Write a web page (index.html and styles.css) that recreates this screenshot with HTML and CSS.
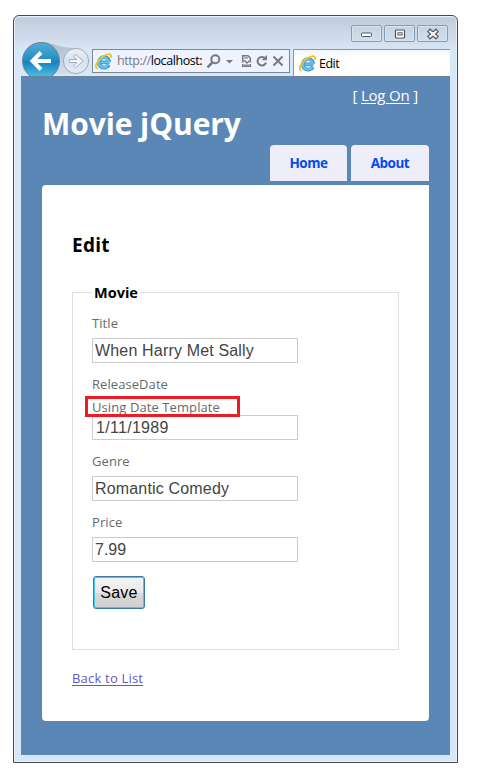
FILE: index.html
```html
<!DOCTYPE html>
<html lang="en">
<head>
<meta charset="utf-8">
<title>Edit</title>
<link rel="stylesheet" href="styles.css">
</head>
<body>
<svg class="defs" width="0" height="0">
  <defs>
    <linearGradient id="blue" x1="0" y1="0" x2="0" y2="1"><stop offset="0" stop-color="#55aed8"/><stop offset=".5" stop-color="#208abf"/><stop offset=".52" stop-color="#1681bb"/><stop offset="1" stop-color="#55c8ee"/></linearGradient>
    <linearGradient id="pale" x1="0" y1="0" x2="0" y2="1"><stop offset="0" stop-color="#edf1f8"/><stop offset=".5" stop-color="#d8e1ee"/><stop offset="1" stop-color="#e3ebf6"/></linearGradient>
    <linearGradient id="bridge" x1="0" y1="0" x2="0" y2="1"><stop offset="0" stop-color="#aebccb"/><stop offset="1" stop-color="#d1dfed"/></linearGradient>
    <symbol id="ie" viewBox="0 0 16 16">
      <path d="M13.6 8.9H5.2M13 11.1A5 5 0 1 1 13.5 8.2" fill="none" stroke="#2d8fca" stroke-width="3.5"/>
      <path d="M13.2 8.8H5.2M12.5 11.2A4.8 4.8 0 1 1 13.1 8.3" fill="none" stroke="#62c0ec" stroke-width="2.3"/>
      <path d="M2.7 14.7C-1.5 14.5 2 6.8 7.2 3.4C11.5.4 16.6-.2 14.8 4.4" fill="none" stroke="#f9c021" stroke-width="1.8"/>
    </symbol>
  </defs>
</svg>
<div class="window">
  <div class="titlebar">
    <span class="ctl"><svg width="14" height="12"><rect x="1.5" y="5" width="10" height="3.5" rx="1" fill="#fff" stroke="#50545f"/></svg></span>
    <span class="ctl"><svg width="12" height="12"><rect x="1.5" y="2" width="9" height="8" rx="1" fill="#fff" stroke="#50545f" stroke-width="1.2"/><rect x="4" y="4.8" width="4" height="2.2" fill="#fff" stroke="#50545f"/></svg></span>
    <span class="ctl"><svg width="12" height="12"><path d="M1.5 2L10.5 10M10.5 2L1.5 10" stroke="#50545f" stroke-width="4.4"/><path d="M2.3 2.7L9.7 9.3M9.7 2.7L2.3 9.3" stroke="#fff" stroke-width="2.2"/></svg></span>
  </div>
  <div class="toolbar">
    <svg class="nav" width="71" height="35" viewBox="21 41 71 35">
      <path d="M42 42C54 42 55 48 77 48V74H42Z" fill="url(#bridge)"/>
      <circle cx="76" cy="61" r="12.6" fill="url(#pale)" stroke="#a1abb8"/>
      <path d="M69.5 59.5H77L73.5 56.5L75.5 54.3L83.3 61L75.5 67.7L73.5 65.5L77 62.5H69.5Z" fill="#f2f5fa" stroke="#a6afbc"/>
      <circle cx="41" cy="61" r="18.5" fill="url(#blue)" stroke="#65859c"/>
      <path d="M51 61H33M41 52.5L32.5 61L41 69.5" fill="none" stroke="#fff" stroke-width="4"/>
    </svg>
    <div class="address">
      <svg class="ie" width="17" height="17"><use href="#ie"/></svg>
      <span class="url">http://<b>localhost:</b></span>
      <svg class="tools" width="84" height="16" viewBox="205 53 84 16" fill="none" stroke="#777981" stroke-width="2">
        <circle cx="215.3" cy="59.3" r="4"/><path d="M212.3 62.5L207.5 67.3" stroke-width="2.5"/>
        <path d="M226 60H233L229.5 63.6Z" fill="#777981" stroke="none"/>
        <path d="M242.7 61V55.7H248L250.3 58V61M242.7 64V66.3H250.3V64" stroke-width="1.5"/>
        <path d="M242 62.5L244.5 60.5L247 63L249 61L251 62.5" stroke-width="1.3"/>
        <path d="M244 58H248M244 65H249" stroke-width="1.2"/>
        <path d="M265.3 58.6A4.3 4.3 0 1 0 266 62.5"/><path d="M261.5 60.3H267V55Z" fill="#777981" stroke="none"/>
        <path d="M273.5 56.5L282.5 65.5M282.5 56.5L273.5 65.5"/>
      </svg>
    </div>
    <div class="browser-tab"><svg class="ie" width="17" height="17"><use href="#ie"/></svg><span>Edit</span></div>
  </div>
  <div class="page">
    <div class="logon">[ <a>Log On</a> ]</div>
    <h1><span>Movie jQuery</span></h1>
    <nav class="menu"><a class="home">Home</a><a class="about">About</a></nav>
    <main>
      <h2>Edit</h2>
      <section class="fieldset">
        <div class="legend">Movie</div>
        <div class="field"><label>Title</label><div class="input wide">When Harry Met Sally</div></div>
        <div class="field"><label>ReleaseDate</label><div class="template"><span>Using Date Template</span></div><div class="input date">1/11/1989</div></div>
        <div class="field"><label>Genre</label><div class="input wide">Romantic Comedy</div></div>
        <div class="field"><label>Price</label><div class="input">7.99</div></div>
        <button>Save</button>
      </section>
      <a class="back">Back to List</a>
    </main>
  </div>
</div>
</body>
</html>
```
FILE: styles.css
```css
* { box-sizing: border-box; }
body { margin: 0; padding: 15px 0 0 13px; background: #fff; font-family: "Open Sans", "Noto Sans", sans-serif; }
.defs { position: absolute; }
.window { width: 445px; height: 748px; border: 1px solid #4a4a4a; border-radius: 6px 6px 0 0; padding: 0 7px 7px; background: linear-gradient(#dce9f5 0, #bfccdb 2px, #d5e1f0 28px, #d6e7f7 34px); box-shadow: inset 0 0 0 1px #e6f1fb; }
.titlebar { height: 33px; padding: 9px 2px 0 0; display: flex; justify-content: flex-end; gap: 2px; }
.ctl { width: 31px; height: 17px; border: 1px solid #8c9bb4; border-radius: 2px; box-shadow: inset 0 0 0 1px #d8e3f0; display: flex; align-items: center; justify-content: center; }
.toolbar { height: 27px; display: flex; align-items: flex-start; }
.nav { flex: none; margin-top: -8px; }
.address { width: 198px; height: 24px; border: 1px solid #7b8798; background: #eff3ff; display: flex; align-items: center; padding-left: 2px; flex: none; }
.ie { flex: none; }
.url { width: 95px; padding-left: 5px; font-size: 12.5px; line-height: 20px; color: #777981; white-space: nowrap; letter-spacing: -.42px; }
.url b { font-weight: 400; color: #000; }
.tools { flex: none; margin-left: -2px; }
.browser-tab { width: 157px; height: 27px; margin-left: 3px; border: 1px solid #8b98aa; border-width: 1px 0 0 1px; background: linear-gradient(#f4f6fd, #fff 8px); display: flex; align-items: center; padding-left: 5px; gap: 3px; font-size: 12.5px; letter-spacing: -.5px; color: #000; }
.page { width: 429px; height: 679px; background: #5b87b7; padding: 0 21px; border-top: 1px solid #6f8296; }
.logon { height: 28px; padding: 7px 11px 0 0; line-height: 22px; text-align: right; color: #fff; font-size: 15px; letter-spacing: -.25px; word-spacing: .2px; }
.logon a { text-decoration: underline; text-underline-offset: 2px; }
h1 { margin: 0; height: 40px; line-height: 38px; font-size: 30px; color: #fff; font-weight: 700; white-space: nowrap; letter-spacing: -.08px; }
.menu { height: 40px; display: flex; justify-content: flex-end; gap: 4px; }
.menu a { height: 36px; line-height: 36px; border-radius: 4px 4px 0 0; background: #eeeef8; color: #034af3; font-size: 13.5px; font-weight: 700; text-align: center; letter-spacing: -.5px; }
.menu .about { letter-spacing: -.5px; }
.home { width: 77px; }
.about { width: 78px; }
main { height: 536px; background: #fff; border-radius: 4px 0 4px 4px; padding: 46px 30px 0; }
h2 { margin: 0; height: 61px; line-height: 28px; font-size: 19px; font-weight: 700; color: #000; letter-spacing: .3px; }
.fieldset { height: 358px; border: 1px solid #ddd; padding: 0 19px; }
.legend { width: 48px; height: 23px; line-height: 22px; margin-top: -11px; margin-bottom: 11px; padding-left: 2px; background: #fff; color: #000; font-size: 14.5px; font-weight: 700; letter-spacing: 0; white-space: nowrap; }
.field { margin-bottom: 14px; }
label { display: block; height: 22px; line-height: 15px; font-size: 13px; letter-spacing: .07px; color: #696969; }
.input { width: 206px; height: 25px; border: 1px solid #ccc; padding-left: 2px; line-height: 23px; font-family: "Liberation Sans", Arial, sans-serif; font-size: 16px; color: #444; white-space: nowrap; }
.wide { letter-spacing: .17px; }
.date { letter-spacing: .3px; padding-left: 3px; }
.template { position: relative; height: 16px; line-height: 16px; font-size: 13px; letter-spacing: .09px; color: #696969; white-space: nowrap; }
.template::after { content: ""; position: absolute; box-sizing: border-box; left: -7px; top: -3px; width: 155px; height: 21px; border: 3px solid #ed1c24; }
button { display: block; margin-left: 1px; width: 52px; height: 33px; padding: 0; border: 1px solid #3a79ab; border-radius: 3px; box-shadow: inset 0 0 0 1px #46c8f4; background: linear-gradient(#f4f4f4 0, #e9e9e9 50%, #dadada 50%, #cfcfcf); font-family: "Liberation Sans", Arial, sans-serif; font-size: 16px; letter-spacing: .2px; color: #000; }
.back { display: inline-block; margin-top: 18px; line-height: 20px; font-size: 13px; letter-spacing: .2px; color: #5c5cc0; text-decoration: underline; text-underline-offset: 2px; white-space: nowrap; }
```
